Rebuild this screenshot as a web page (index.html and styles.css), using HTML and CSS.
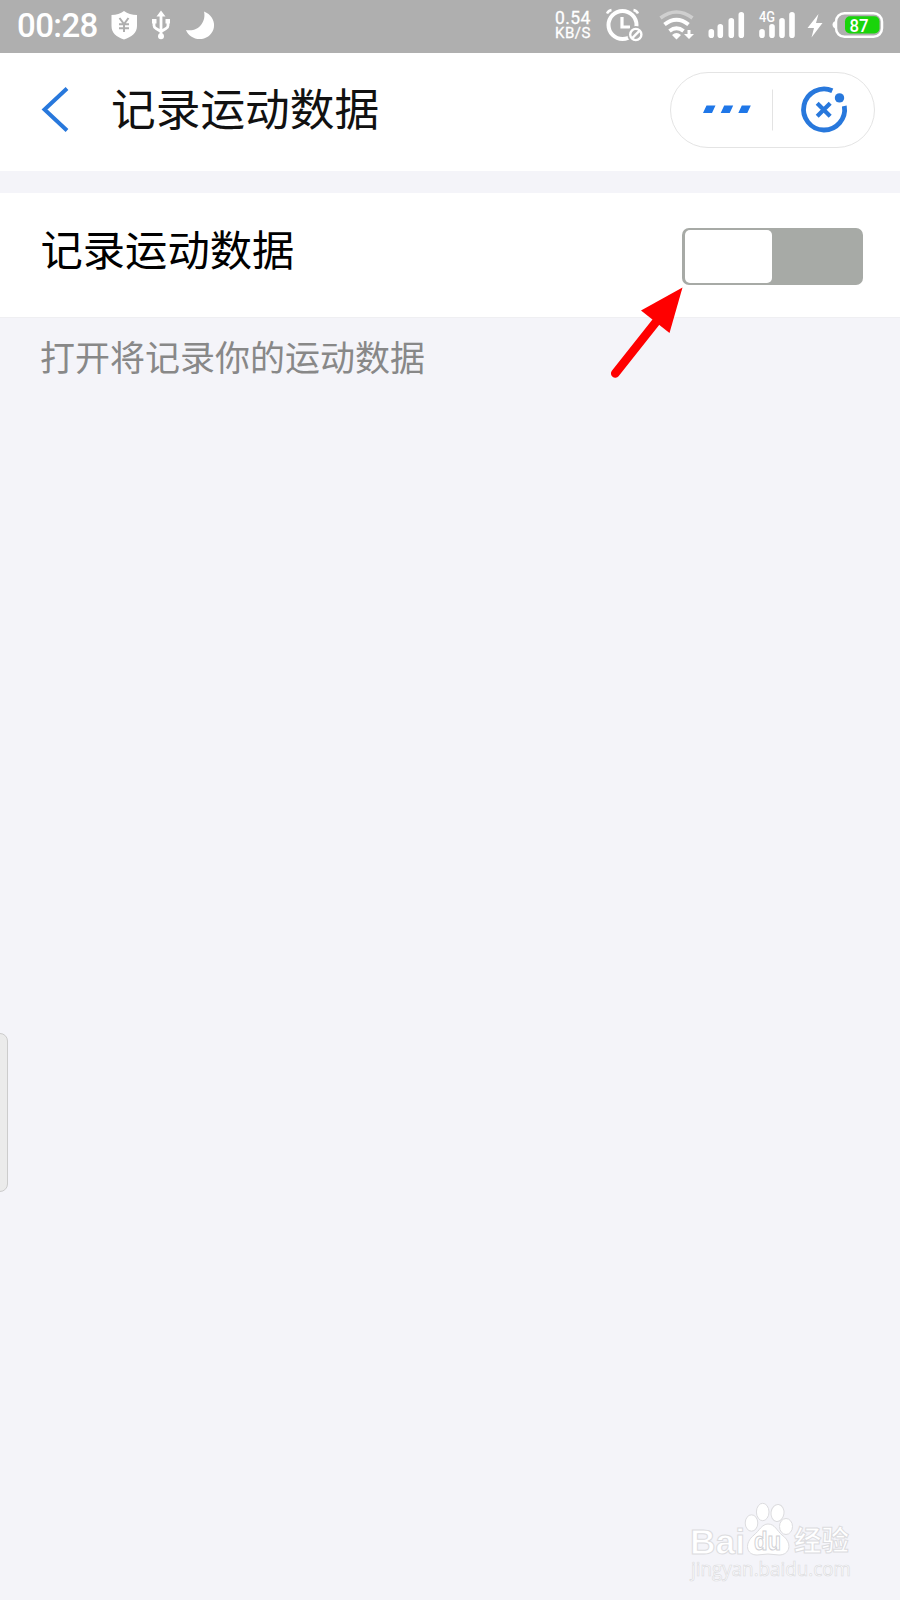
FILE: index.html
```
<!DOCTYPE html>
<html lang="zh-CN">
<head>
<meta charset="utf-8">
<title>记录运动数据</title>
<link rel="stylesheet" href="styles.css">
</head>
<body>
<div class="screen">
  <div class="status">
    <span class="clock">00:28</span>
    <svg class="status-left" width="110" height="53" viewBox="108 0 110 53">
      <path fill="#fff" d="M124 11c3.500 2.600 8 3.800 13 4v11c0 7-5.500 11-13 13.500-7.500-2.500-12.500-6.500-12.500-13.500V15c5-.2 9-1.400 12.500-4z"/>
      <path class="yen" d="M119.500 18l4.500 6 4.500-6M124 24v8M119 24.200h10M119 28.200h10"/>
      <g class="line" stroke-width="2.800"><path d="M161 15v21M154 22v3.500q0 2 2 3l5 3M168 21v4.500q0 2-2 3l-5 3"/></g>
      <path fill="#fff" d="M161 10.500l4.500 6h-9zM152 19h4.500v4.500h-4.500zM165.500 19h4.500v4.500h-4.500z"/>
      <circle cx="161" cy="36.200" r="3" fill="#fff"/>
      <path fill="#fff" d="M204 11.500c14 5.500 13 23 0 27-8 2.200-15.500-2-18-8.500 12 2.500 20.500-8 18-18.500z"/>
    </svg>
    <div class="speed"><span>0.54</span><span>KB/S</span></div>
    <svg width="290" height="53" viewBox="600 0 290 53">
      <g class="line" stroke-width="2.500">
        <circle cx="622.500" cy="25" r="14" stroke-width="4"/>
        <path d="M607 13.500q1.500-3 4.500-3.500M638 13.500q-1.500-3-4.500-3.500"/>
        <path stroke-width="3.200" d="M622 17v10h8"/>
      </g>
      <circle cx="635.800" cy="34.500" r="8.500" fill="#afafaf"/>
      <circle class="line" cx="635.800" cy="34.500" r="5.600"/>
      <path class="line" d="M632 38.300l7.600-7.600"/>
      <path fill="none" stroke="#cfcfcf" stroke-width="3.600" d="M660.500 18q16-12 32 0"/>
      <path class="line" stroke-width="4" d="M664.500 24.500q12-9.500 24 0M669.500 31q7-5.500 14 0"/>
      <path fill="#fff" d="M672 35q4.500-4 9 0l-4.500 4.500zM687.500 30h3v4h3.500l-5 5-5-5h3.500z"/>
      <g class="bars"><path d="M711.300 31.700v3.500M720.300 26.700v8.500M731.300 20.700v14.500M741.300 14.700v20.500M762 31.700v3.500M772 26.700v8.500M782 20.700v14.500M792 14.700v20.500"/></g>
      <text class="network" x="759" y="22" textLength="16" lengthAdjust="spacingAndGlyphs">4G</text>
      <path fill="#fff" d="M818.500 14l-11 14h6.500l-2.500 9.500 11-14.500h-6.500z"/>
      <path fill="#fff" d="M837 20.500q-4.500 1-4.500 4.300t4.500 4.200z"/>
      <rect x="836" y="13.200" width="46" height="23.600" rx="8.500" fill="#afafaf" stroke="#fff" stroke-width="2.500"/>
      <rect x="845" y="16.200" width="34.500" height="17.200" rx="5" fill="#19d40b"/>
      <text class="charge" x="849.500" y="31.500" textLength="19" lengthAdjust="spacingAndGlyphs">87</text>
    </svg>
  </div>
  <header class="header">
    <svg class="back" width="28" height="46" viewBox="41 86 28 46">
      <path fill="none" stroke="#2878dc" stroke-width="4" d="M67 88.500L44.500 109.500 67 130.500"/>
    </svg>
    <h1 class="title">记录运动数据</h1>
    <div class="capsule">
      <svg width="203" height="74" viewBox="671 73 203 74">
        <path fill="#1f77e8" d="M706.500 105.500h9l-3.500 7.500h-9zM724.200 105.500h9l-3.500 7.500h-9zM741.800 105.500h9l-3.500 7.500h-9z"/>
        <path stroke="#e3e3e3" d="M772.500 89.500v41"/>
        <path fill="none" stroke="#2878dc" stroke-width="4.800" d="M832.300 90.700A20.500 20.500 0 1 0 844.300 106"/>
        <circle cx="839.500" cy="97.900" r="4.700" fill="#2878dc"/>
        <path stroke="#2878dc" stroke-width="4.200" d="M817.200 103.200l13 13M830.200 103.200l-13 13"/>
      </svg>
    </div>
  </header>
  <main>
    <div class="row">
      <span class="label">记录运动数据</span>
      <div class="switch"><div class="thumb"></div></div>
    </div>
    <p class="hint">打开将记录你的运动数据</p>
  </main>
  <svg class="arrow" width="82" height="98" viewBox="605 284 82 98">
    <path stroke="#f00" stroke-width="8.500" stroke-linecap="round" d="M615.200 373.500L656 322"/>
    <path fill="#f00" d="M682.500 287.500l-13 45.500-28.500-22.500z"/>
  </svg>
  <div class="handle"></div>
  <svg class="watermark" width="180" height="90" viewBox="680 1495 180 90">
    <g class="mark">
      <ellipse cx="751.500" cy="1523" rx="6.300" ry="8.200"/>
      <ellipse cx="762.700" cy="1512" rx="6.300" ry="8.700"/>
      <ellipse cx="777.500" cy="1513" rx="6.500" ry="8.500" transform="rotate(8 777.500 1513)"/>
      <ellipse cx="786" cy="1526.500" rx="6.500" ry="8"/>
      <path d="M768 1524c7 0 9 7 14 11 11 8 8 20-3 20q-11-2-22 0c-11 0-13-12-3-20 5-4 8-11 14-11z"/>
      <text class="baidu" x="690" y="1553.500" textLength="55" lengthAdjust="spacingAndGlyphs">Bai</text>
      <text class="du" x="754" y="1550" textLength="27" lengthAdjust="spacingAndGlyphs">du</text>
      <text class="jingyan" x="794" y="1551" textLength="55" lengthAdjust="spacingAndGlyphs">经验</text>
      <text class="url" x="691" y="1576" textLength="160" lengthAdjust="spacingAndGlyphs">jingyan.baidu.com</text>
    </g>
  </svg>
</div>
</body>
</html>
```
FILE: styles.css
```
* { box-sizing: border-box; }
body {
  margin: 0;
  background: #f4f4f9;
  font-family: Roboto, "Noto Sans CJK SC", sans-serif;
}
.screen {
  position: relative;
  width: 900px;
  height: 1600px;
  overflow: hidden;
  background: #f4f4f9;
}
svg { display: block; flex: none; }
.status {
  display: flex;
  height: 53px;
  padding-left: 17px;
  background: #afafaf;
  color: #fff;
}
.clock {
  width: 91px;
  font-size: 33px;
  line-height: 51px;
  font-weight: 500;
  letter-spacing: -0.6px;
}
.speed {
  display: flex;
  flex-direction: column;
  width: 45px;
  margin-left: 337px;
  padding-top: 11px;
  font-size: 17.500px;
  line-height: 15px;
  font-weight: 400;
  -webkit-text-stroke: 0.3px #fff;
}
.speed span { height: 15px; letter-spacing: 0.4px; }
.speed span + span { font-size: 15px; letter-spacing: 0.5px; }
.line {
  fill: none;
  stroke: #fff;
}
.line:not([stroke-width]) { stroke-width: 2.4; }
.yen {
  fill: none;
  stroke: #afafaf;
  stroke-width: 2;
}
.bars {
  stroke: #fff;
  stroke-width: 5.6;
  stroke-linecap: round;
}
.network {
  fill: #fff;
  font-size: 14px;
  font-weight: 500;
}
.charge {
  fill: #fff;
  font-size: 18.500px;
  font-weight: 500;
}
.header {
  display: flex;
  height: 118px;
  padding: 19px 25px 0 41px;
  background: #fff;
}
.back { margin-top: 14px; }
.title {
  flex: 1;
  margin: -2px 0 0 42px;
  font: 400 44.700px/74px "Noto Sans CJK SC", sans-serif;
  color: #111;
}
.capsule {
  width: 205px;
  height: 76px;
  border: 1px solid #e4e4e4;
  border-radius: 38px;
}
main { padding-top: 21.500px; }
.row {
  display: flex;
  justify-content: space-between;
  height: 125px;
  padding: 35px 37.500px 0 40.500px;
  background: #fff;
  border-bottom: 1px solid #efeff2;
}
.label {
  margin-top: -3px;
  font: 400 42.300px/46px "Noto Sans CJK SC", sans-serif;
  color: #000;
}
.switch {
  width: 180.500px;
  height: 57.500px;
  padding: 2.500px;
  border-radius: 7px;
  background: #a7aaa6;
}
.thumb {
  width: 87.500px;
  height: 52.500px;
  border-radius: 5px;
  background: #fff;
}
.hint {
  margin: 13.500px 0 0 40px;
  font: 400 35px/50px "Noto Sans CJK SC", sans-serif;
  color: #888;
}
.arrow {
  position: absolute;
  left: 605px;
  top: 284px;
}
.handle {
  position: absolute;
  left: -8px;
  top: 1033px;
  width: 16px;
  height: 159px;
  border: 1.500px solid #ccc;
  border-radius: 8px;
  background: #ebebeb;
}
.watermark {
  position: absolute;
  left: 680px;
  top: 1495px;
}
.mark {
  fill: #fff;
  stroke: #dcdcdf;
  stroke-width: 1;
}
.baidu, .du {
  font-family: "Liberation Sans", sans-serif;
  font-weight: 700;
}
.baidu { font-size: 35px; }
.du { font-size: 25px; stroke: #d0d0d4; }
.jingyan {
  font-family: "Noto Sans CJK SC", sans-serif;
  font-weight: 700;
  font-size: 28px;
}
.url {
  font-family: "Open Sans", sans-serif;
  font-size: 20px;
  stroke-width: 0.7;
}
```
